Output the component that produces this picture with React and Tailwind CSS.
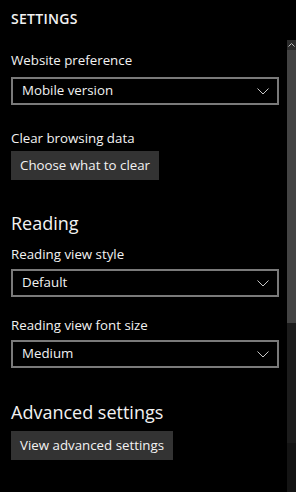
import { useState } from 'react'

const font = { fontFamily: '"Open Sans", "Noto Sans", sans-serif' }

function Chevron() {
  return (
    <svg width="12" height="7" viewBox="0 0 12 7" className="text-[#c8c8c8]">
      <path d="M0.5 0.5 L6 6 L11.5 0.5" fill="none" stroke="currentColor" strokeWidth="1" />
    </svg>
  )
}

function Select({ value }) {
  return (
    <div className="h-[28px] border-2 border-[#7a7a7a] flex items-center justify-between pl-[9px] pr-[8px]">
      <span className="text-[13.3px] text-[#f2f2f2] leading-none">{value}</span>
      <Chevron />
    </div>
  )
}

function Button({ children }) {
  return (
    <button className="h-[29px] bg-[#333333] px-[9px] text-[13.3px] text-[#f2f2f2] leading-none self-start">
      {children}
    </button>
  )
}

export default function App() {
  const [open] = useState(false)

  return (
    <div className="w-[296px] h-[492px] bg-black flex overflow-hidden" style={font}>
      {/* Content */}
      <div className="flex-1 flex flex-col pl-[11px] pr-[8px]">
        <div className="mt-[10px] text-[14px] font-semibold tracking-[0.3px] text-[#f2f2f2] leading-[18px]">SETTINGS</div>

        <div className="mt-[23px] text-[13.3px] text-[#f2f2f2] leading-[18px]">Website preference</div>
        <div className="mt-[8px]">
          <Select value="Mobile version" />
        </div>

        <div className="mt-[24px] text-[13.3px] text-[#f2f2f2] leading-[18px]">Clear browsing data</div>
        <div className="mt-[4px] flex">
          <Button>Choose what to clear</Button>
        </div>

        <div className="mt-[30px] text-[18px] text-[#f2f2f2] leading-[26px]">Reading</div>
        <div className="mt-[9px] text-[13.3px] text-[#f2f2f2] leading-[18px]">Reading view style</div>
        <div className="mt-[6px]">
          <Select value="Default" />
        </div>

        <div className="mt-[19px] text-[13.3px] text-[#f2f2f2] leading-[18px]">Reading view font size</div>
        <div className="mt-[6px]">
          <Select value="Medium" />
        </div>

        <div className="mt-[31px] text-[18px] text-[#f2f2f2] leading-[26px]">Advanced settings</div>
        <div className="mt-[6px] flex">
          <Button>View advanced settings</Button>
        </div>
      </div>

      {/* Scrollbar */}
      <div className="w-[9px] flex flex-col">
        <div className="h-[40px] bg-black" />
        <div className="h-[10px] bg-[#2b2b2b] flex items-center justify-center">
          <svg width="7" height="4" viewBox="0 0 7 4">
            <path d="M0.5 3.5 L3.5 0.5 L6.5 3.5" fill="none" stroke="#bdbdbd" strokeWidth="1" />
          </svg>
        </div>
        <div className="h-[273px] bg-[#434343]" />
        <div className="h-[120px] bg-[#1c1c1c]" />
        <div className="flex-1 bg-[#141414]" />
      </div>
    </div>
  )
}
